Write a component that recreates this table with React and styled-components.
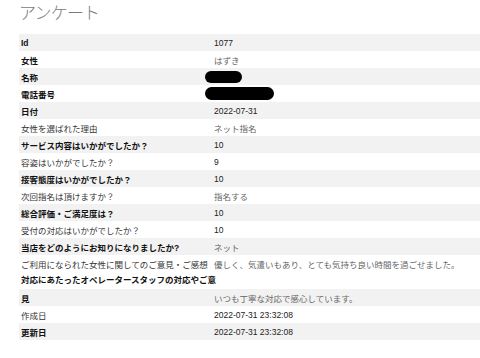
import styled, { createGlobalStyle } from "styled-components";

const Global = createGlobalStyle`
  html, body { margin: 0; padding: 0; background: #fff; }
  body { font-family: "Liberation Sans", "Noto Sans CJK JP", sans-serif; }
`;

const Page = styled.div`
  padding-left: 19px;
  width: 461px;
`;

const Title = styled.h1`
  margin: 0 0 10px 0;
  font-family: "Noto Sans CJK JP", sans-serif;
  font-size: 17px;
  font-weight: 300;
  line-height: 24px;
  color: #7a7a7a;
  letter-spacing: -0.8px;
`;

const Row = styled.div`
  display: grid;
  grid-template-columns: 193px 1fr;
  height: 17px;
  align-items: center;
  background: ${(p) => (p.$striped ? "#f2f2f2" : "#fff")};
  font-size: 8.5px;
`;

const Label = styled.div`
  padding-left: 2px;
  white-space: nowrap;
  font-weight: ${(p) => (p.$bold ? 700 : 400)};
  color: ${(p) => (p.$bold ? "#111" : "#333")};
`;

const Value = styled.div`
  padding-left: 2px;
  white-space: nowrap;
  color: ${(p) => (p.$muted ? "#666" : "#222")};
`;

const Spill = styled.div`
  height: 17px;
  line-height: 17px;
  padding-left: 2px;
  font-size: 8.5px;
  font-weight: 700;
  color: #111;
  white-space: nowrap;
`;

const Masked = styled.span`
  display: block;
  margin-left: -9px;
  width: ${(p) => p.$w}px;
  height: ${(p) => p.$h}px;
  border-radius: ${(p) => p.$h / 2}px;
  background: #000;
`;

const rows = [
  { label: "Id", value: "1077", bold: true },
  { label: "女性", value: "はずき", bold: true, muted: true },
  { label: "名称", mask: [37, 12], bold: true },
  { label: "電話番号", mask: [69, 13], bold: true },
  { label: "日付", value: "2022-07-31", bold: true },
  { label: "女性を選ばれた理由", value: "ネット指名", muted: true },
  { label: "サービス内容はいかがでしたか？", value: "10", bold: true },
  { label: "容姿はいかがでしたか？", value: "9" },
  { label: "接客態度はいかがでしたか？", value: "10", bold: true },
  { label: "次回指名は頂けますか？", value: "指名する", muted: true },
  { label: "総合評価・ご満足度は？", value: "10", bold: true },
  { label: "受付の対応はいかがでしたか？", value: "10" },
  { label: "当店をどのようにお知りになりましたか?", value: "ネット", bold: true, muted: true },
  { label: "ご利用になられた女性に関してのご意見・ご感想", value: "優しく、気遣いもあり、とても気持ち良い時間を過ごせました。", muted: true },
  { spill: "対応にあたったオペレータースタッフの対応やご意", label: "見", value: "いつも丁寧な対応で感心しています。", bold: true, muted: true },
  { label: "作成日", value: "2022-07-31 23:32:08" },
  { label: "更新日", value: "2022-07-31 23:32:08", bold: true },
];

export default function App() {
  return (
    <Page>
      <Global />
      <Title>アンケート</Title>
      {rows.map((r, i) => (
        <div key={i}>
          {r.spill && <Spill>{r.spill}</Spill>}
          <Row $striped={i % 2 === 0}>
            <Label $bold={r.bold}>{r.label}</Label>
            <Value $muted={r.muted}>
              {r.mask ? <Masked $w={r.mask[0]} $h={r.mask[1]} /> : r.value}
            </Value>
          </Row>
        </div>
      ))}
    </Page>
  );
}
